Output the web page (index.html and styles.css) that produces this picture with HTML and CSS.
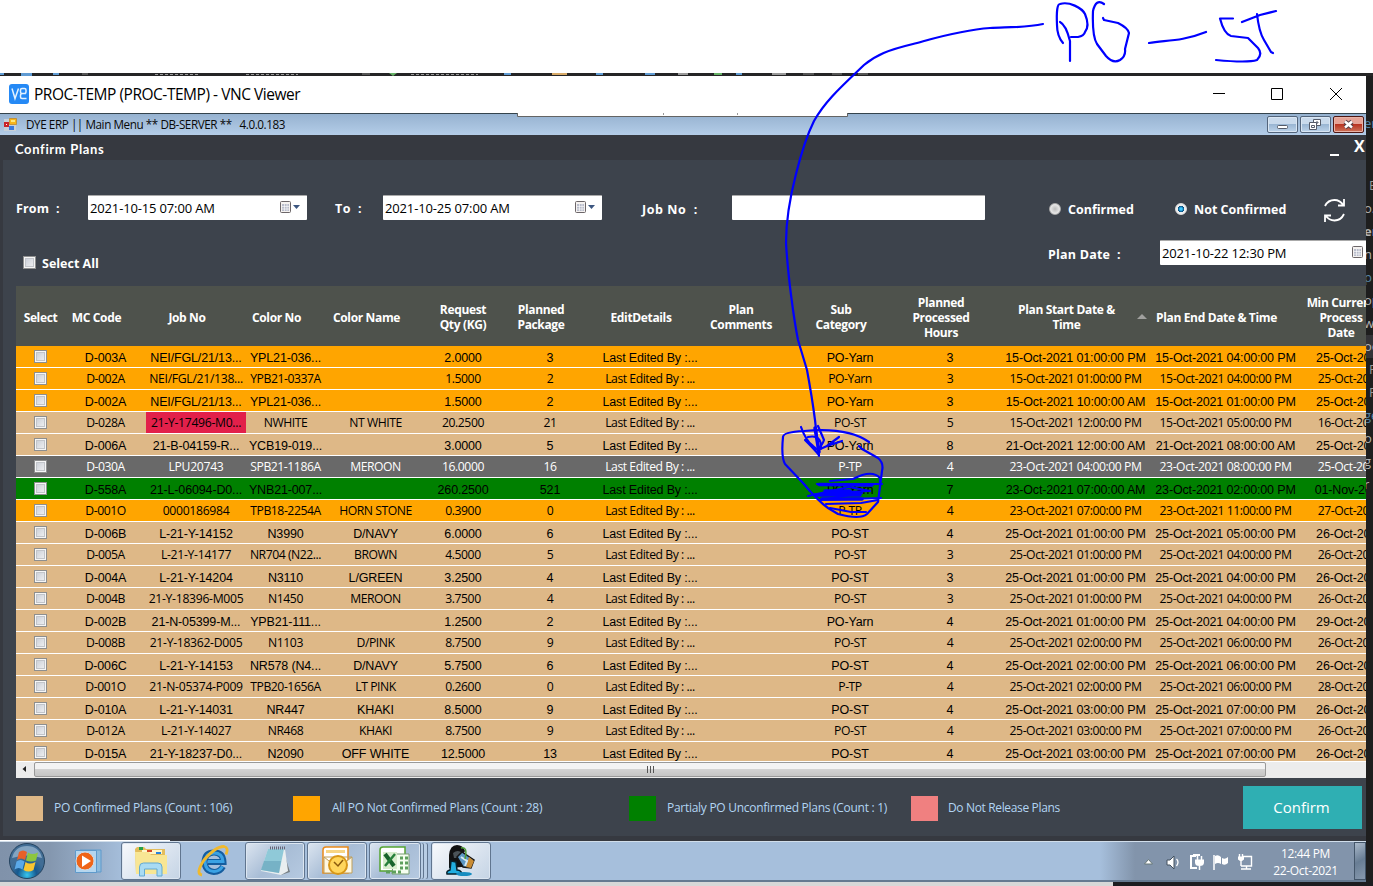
FILE: index.html
```html
<!DOCTYPE html>
<html lang="en">
<head>
<meta charset="utf-8">
<title>PROC-TEMP (PROC-TEMP) - VNC Viewer</title>
<link rel="stylesheet" href="styles.css">
</head>
<body>
<div class="blank"></div>
<div class="strip">
  <svg width="1373" height="3"><g fill="#5f9bd3"><path d="M0 0h4v2H0zM21 0h11v3H21zM53 0h6v2h-6zM504 0h7v2h-7zM596 0h7v2h-7zM645 0h10v2h-10zM736 0h6v2h-6z"/></g><g fill="none" stroke="#999"><path stroke-dasharray="3 2" d="M155 1.500h44M246 1.500h52M411 1.500h67"/></g><g fill="#999"><path d="M678 0h10v2h-10zM772 0h14v2h-14z"/></g><path fill="#d8aa68" d="M552 0h15v2h-15z"/><path fill="#66b266" d="M389 0h8l-4 3zM714 0h8v2h-8z"/><path fill="#555" d="M82 0h6v2h-6zM362 0h8v2h-8zM803 0h11v2h-11zM832 0h10v2h-10zM858 0h10v2h-10z"/></svg>
</div>
<div class="desk">
  <main class="vnc">
    <header class="vnc-title">
      <svg width="20" height="20" viewBox="0 0 20 20"><rect width="20" height="20" rx="3" fill="#2589f5"/><path d="M3 4.500l3 10 3.500-10M17 9.500h-4q-1.500 0-1.500-1.500V6q0-1.500 1.500-1.500h2.500q1.500 0 1.500 1.500v2q0 1.500-1.500 1.500h-2q-2 0-2 2V13q0 1.500 1.500 1.500H17.500" fill="none" stroke="#e4f2ff" stroke-width="1.500"/></svg>
      <span class="vnc-name">PROC-TEMP (PROC-TEMP) - VNC Viewer</span>
      <svg class="vnc-ctl" width="130" height="14" fill="none" stroke="#000"><path d="M0 6.500h12M58.500 1.500h11v11h-11zM117 1l12 12M129 1l-12 12"/></svg>
    </header>
    <div class="app-title">
      <svg width="13" height="13" viewBox="0 0 13 13"><path fill="#c8d0d8" d="M0 1h12v12H0z"/><path fill="#c9252b" d="M0 4h5v5H0z"/><path fill="#fff" d="M2 6h1v1H2z"/><path fill="#f7b51b" stroke="#b87811" stroke-width=".6" d="M5.500.5h7v6h-7z"/><path fill="#ffe77a" d="M7 2h4v2H7z"/><path fill="#3979dd" d="M5 8h5v4H5z"/></svg>
      <span class="app-name">DYE ERP || Main Menu ** DB-SERVER **&nbsp;&nbsp; 4.0.0.183</span>
      <span class="win-btn"><svg width="29" height="15"><rect x="9.500" y="8.500" width="10" height="3" rx="1" fill="#fff" stroke="#555b68"/></svg></span>
      <span class="win-btn"><svg width="29" height="15" fill="#fff" stroke="#555b68"><path d="M12.500 2.500h7v6h-7zM15 5h2v1h-2z"/><path d="M8.500 5.500h7v7h-7zM10.500 8.500h3v2h-3z"/></svg></span>
      <span class="win-btn win-close"><svg width="29" height="15"><path d="M11 4.500l7 6M18 4.500l-7 6" stroke="#554047" stroke-width="4.500"/><path d="M11 4.500l7 6M18 4.500l-7 6" stroke="#fff" stroke-width="2.500"/></svg></span>
      <svg class="notch" width="331" height="5"><path d="M.5-1v4.500h330V-1" fill="#fff" stroke="#646464"/><path d="M146.500 0v2M220.500 0v2" stroke="#999"/></svg>
    </div>
    <div class="form-title"><span class="form-name">Confirm Plans</span><span class="form-min"></span><span class="form-x">X</span></div>
    <section class="panel">
      <div class="filters">
        <label class="lbl l-from">From&nbsp; :</label>
        <div class="date"><span>2021-10-15 07:00 AM</span><svg width="21" height="14"><use href="#cal"/><path d="M13 4h7l-3.500 4z" fill="#3c5680"/></svg></div>
        <label class="lbl l-to">To&nbsp; :</label>
        <div class="date"><span>2021-10-25 07:00 AM</span><svg width="21" height="14"><use href="#cal"/><path d="M13 4h7l-3.500 4z" fill="#3c5680"/></svg></div>
        <label class="lbl l-job">Job No&nbsp; :</label>
        <div class="job-input"></div>
        <span class="radio r-a"></span><span class="lbl l-conf">Confirmed</span>
        <span class="radio on"></span><span class="lbl l-not">Not Confirmed</span>
        <svg class="refresh" width="24" height="26" fill="none" stroke="#fff" stroke-width="1.800"><path d="M2 9Q5 3 11.500 3q5.500 0 9 5.500M21 2v6.500h-6M21 17Q18 23.500 11.500 23.500q-5.500 0-9-5M2 25v-6.500h6"/></svg>
      </div>
      <div class="second">
        <span class="check"></span><span class="lbl l-all">Select All</span>
        <span class="lbl l-plan">Plan Date&nbsp; :</span>
        <div class="date plan"><span>2021-10-22 12:30 PM</span><svg width="13" height="14"><g id="cal"><rect x=".5" y=".5" width="10" height="11" rx="1" fill="#f5f2f0" stroke="#6c6669"/><path d="M2 3h7v7H2z" fill="#b9bdcb"/><path d="M4.500 3v7M7 3v7M2 5.500h7M2 8h7" stroke="#fff" stroke-width=".6"/></g></svg></div>
      </div>
      <div class="table">
        <div class="thead grid"><div class="flush">Select</div><div>MC Code</div><div>Job No</div><div>Color No</div><div>Color Name</div><div class="flush">Request<br>Qty (KG)</div><div>Planned<br>Package</div><div>EditDetails</div><div>Plan<br>Comments</div><div>Sub<br>Category</div><div>Planned<br>Processed<br>Hours</div><div class="sorted">Plan Start Date &amp;<br>Time<i></i></div><div>Plan End Date &amp; Time</div><div>Min Current<br>Process<br>Date</div></div>
        <div class="tbody" id="rows"></div>
        <div class="hscroll"><svg width="18" height="15"><path d="M10 4v6L6.500 7z" fill="#222"/></svg><div class="thumb"><i></i><i></i><i></i></div></div>
      </div>
      <div class="legend">
        <i class="sw tan"></i><span class="lg g1">PO Confirmed Plans (Count : 106)</span>
        <i class="sw orange"></i><span class="lg g2">All PO Not Confirmed Plans (Count : 28)</span>
        <i class="sw green"></i><span class="lg g3">Partialy PO Unconfirmed Plans (Count : 1)</span>
        <i class="sw coral"></i><span class="lg g4">Do Not Release Plans</span>
        <button class="confirm">Confirm</button>
      </div>
    </section>
    <div class="form-foot"></div>
    <footer class="taskbar">
      <div class="tk start"><svg width="38" height="38" viewBox="0 0 38 38"><defs><radialGradient id="orb" cy=".9"><stop offset="0" stop-color="#38c6ee"/><stop offset=".55" stop-color="#17598f"/><stop offset="1" stop-color="#416d95"/></radialGradient></defs><circle cx="19" cy="19" r="17.500" fill="url(#orb)" stroke="#24435f"/><path d="M4 16Q7 4 19 4t15 12q-15-5-30 0" fill="#c5dced" opacity=".5"/><path fill="#e86128" d="M11 10q4-3 8 0l-2 8q-4-3-8 0z"/><path fill="#8dc63f" d="M20 10.500q4 3 10 0l-2 8q-5 2-10 0z"/><path fill="#5ba9e8" d="M8.500 19.500q4-3 8 0l-2 8q-4-3-8 0z"/><path fill="#fbc630" d="M17.500 20q4 3 10 0l-2 8q-5 3-10 0z"/></svg></div>
      <div class="tk wmp"><svg width="30" height="28"><path fill="#8dbbdd" stroke="#5f9acb" d="M6 3h21v22H6z"/><path fill="#b4d6ef" stroke="#5f9acb" d="M1.500 3.500h21v22h-21zM22.500 3.500v22"/><circle cx="11" cy="14" r="9" fill="#ef6417" stroke="#d5d9df"/><path d="M8 8.500l9 5.500-9 6z" fill="#fff"/></svg></div>
      <div class="tk box explorer"><svg width="34" height="32"><path fill="#e3bd5c" d="M1 4l2-2h7l2 2h19v24H2z"/><path fill="#fff6c8" d="M8 5h20v4H8z"/><path fill="#f8e694" d="M1 7h14l2 3h16v19H2z"/><path d="M5 3.500h4" stroke="#24a148" stroke-width="3"/><path d="M13 6h5" stroke="#d64826" stroke-width="2"/><path d="M22 8h5" stroke="#2683dd" stroke-width="2"/><path d="M5.500 31V22q0-4 4-4h14.500q4 0 4 4v9h-5v-7H10.500v7z" fill="#a9dbf3" stroke="#63a9d2"/></svg></div>
      <div class="tk ie"><svg width="34" height="32"><path d="M27 21.500q-3 5.500-9 5.500-9-1-9.500-10 .5-9.500 9.500-9.500 9 0 9.500 9.500H12" fill="none" stroke="#155d9e" stroke-width="6"/><path d="M26.500 21.500q-3 5-8.500 5-8.500-.5-9-9.500.5-9 9-9 8.500 0 9 8.500H12" fill="none" stroke="#3aa2e4" stroke-width="3"/><path d="M6 30Q-1 29 8 15 20 1 28 1.500q5 1 2 8" fill="none" stroke="#f0b92d" stroke-width="2.800"/></svg></div>
      <div class="tk box notepad"><svg width="32" height="30"><path fill="#777f84" d="M24 4l7 22-9 3z"/><path fill="#e9eef0" d="M9 3h17l3 22-7 4L2 25z"/><path fill="#8fc9d8" d="M9 3h16l-5 24-18-3z"/><path fill="#5d9cb3" d="M5 15h17l-2 12-18-3z" opacity=".5"/><path d="M11 2h15" stroke="#667" stroke-width="3" stroke-dasharray="1 1"/></svg></div>
      <div class="tk box outlook"><svg width="34" height="32"><path fill="#fff" stroke="#e98a1b" stroke-width="1.500" d="M3 5q0-3 3-3h22v26H3z"/><path fill="#f7d584" d="M6 5h19v3H6z"/><path fill="#fff7e0" stroke="#bfa05c" d="M4 12h28v16H4zM4 12l14 11 14-11"/><circle cx="18" cy="20" r="9" fill="#ffd65c" stroke="#d79718" stroke-width="2"/><path d="M14 17l4 4 5-6" fill="none" stroke="#8a5a0c" stroke-width="1.500"/></svg></div>
      <div class="tk box excel"><svg width="34" height="32"><path fill="#fff" stroke="#55a532" stroke-width="1.500" d="M2 5q0-3 3-3h22v24H2z"/><path fill="#f5fff0" stroke="#779b72" d="M16 9h15v20H14z"/><path d="M22 13h3M27 13h3M22 18h3M27 18h3M22 23h3M27 23h3M8 27h4M14 27h4M20 27h3" stroke="#5da05c" stroke-width="3"/><path fill="#d8edcd" d="M5 7h14v17H5z"/><path d="M7 9l9 12" stroke="#17642b" stroke-width="4"/><path d="M17 9L7 21" stroke="#27803b" stroke-width="2.500"/></svg></div>
      <div class="tk box app"><svg width="36" height="34"><path d="M6 24V11q1-10 8-10 6 0 8 6l-3 5v11z" fill="#111"/><path d="M10 9q5-4 9 0l-1 5h-7z" fill="#4b5357"/><path d="M8 17l5 1 1 8q4 0 5 4H4q-1-3 3-4z" fill="#21aee0" stroke="#06222e" stroke-width="1.500"/><path d="M14 13l5-5 12 8-3 8-8-1z" fill="#5d98c4" stroke="#151515" stroke-width="1.500"/><path d="M26 13l5 4-3 7-5-1z" fill="#c98c34"/><path d="M18 13l6 4-2 5" fill="none" stroke="#d7e9f2" stroke-width="2"/><path d="M18 4q7-2 4 11" fill="none" stroke="#4e9c37" stroke-width="1.500"/><ellipse cx="21" cy="30" rx="8" ry="2" fill="#168cc0"/></svg></div>
      <div class="tray"><svg width="112" height="20" fill="none"><path d="M.5 12l4-4.500 4 4.500z" fill="#fff" stroke="#677"/><path d="M23 8h3l4-4v13l-4-4h-3z" fill="#fff" stroke="#43505f"/><path d="M32.500 7q3 3 0 7" stroke="#fff" stroke-width="1.300"/><path d="M52 4h-5v12h6" stroke="#fff" stroke-width="2"/><path d="M49 2h7v2h-7zM51 7.500h9v3q0 3.500-4.500 3.500T51 10.500z" fill="#fff"/><path d="M53.500 4v4M57.500 4v4M55.500 14v4" stroke="#fff" stroke-width="1.500"/><path d="M70 3v15" stroke="#fff" stroke-width="1.500"/><path d="M71 4q3-2 6 1v7q-3-2-6 0zM78 6q3 2 6-1v6q-3 3-6 1z" fill="#fff"/><path d="M99 4.500h8.500v9.500H97M97 17h10M102.500 14v3M95.500 2v3M98.500 2v3" stroke="#fff" stroke-width="1.400"/><path d="M94 4.500h6v3l-2 1.500h-2l-2-1.500z" fill="#fff"/><path d="M97 9v5" stroke="#fff" stroke-width="1.400"/></svg></div>
      <div class="clock"><span>12:44 PM</span><span>22-Oct-2021</span></div>
      <div class="peek"></div>
    </footer>
  </main>
  <aside class="editor"><span class="e1 blue">er</span><span class="e2">E</span><span>o.</span><span class="b">er</span><span>n</span><span class="blue">p</span><span>op</span><span>w</span><span class="hl">oc</span><span class="in">F</span><span class="in">F</span><span class="blue">ge</span><span>o</span><span>g</span><span>r</span></aside>
</div>
<div class="under"><div class="dark"></div></div>
<svg class="ink" width="1373" height="886" fill="none" stroke="#0000ff" stroke-width="2.200" stroke-linecap="round" stroke-linejoin="round">
  <path d="M1043 24C1025 28 1005 27 990 28C960 30 932 39 913 44C888 50 876 55 864 65C842 86 825 101 814 121C805 139 800 158 796 174C789 201 786 228 786 243C788 277 794 320 798 340L807 370Q812 397 815 420L819 456"/>
  <path d="M1063 43Q1057 36 1057 25Q1056 4 1060 4C1069 1 1082 8 1085 14Q1090 26 1085 32Q1084 36 1078 37H1071M1060 22Q1066 25 1070 41V61"/>
  <path d="M1104 4Q1096-2 1093 11Q1092 36 1097 44L1106 56Q1113 64 1120 60Q1126 56 1125 49L1129 33Q1128 28 1118 23L1104 20L1103 18M1149 43C1165 40 1181 42 1206 32"/>
  <path d="M1233 18.500H1220Q1224 34 1231 36L1248 38L1258 48Q1263 54 1257 60Q1248 63 1216 60M1242 22L1260 15L1276 11M1257 14Q1259 32 1264 40L1271 52L1273 53"/>
  <path d="M869 442C852 430 825 429 804 431Q783 432 783 437Q781 457 785 464L803 483Q818 501 828 508L838 514Q860 520 867 514L878 502L882 471Q884 463 878 458L862 449L859 446"/>
  <path d="M801 427Q806 441 813 446L819 451M818 426L824 440Q822 446 818 448M808 437Q822 434 821 449M805 440Q814 449 819 455M839 437L827 446M842 441L827 446L818 450"/>
  <path d="M815 428L819 452" stroke-width="3.500"/>
  <path d="M817 484H882M830 481L853 479Q872 469 880 478L880 487M808 496L849 487L870 491L822 493H862L820 500L881 498M826 504L861 503L878 500M830 508L851 512L866 512"/>
  <path d="M819 484.500L872 485M825 491H850M815 495H860M822 499H862" stroke-width="3.500"/>
</svg>
<script src="app.js"></script>
</body>
</html>
```
FILE: styles.css
```css
* { box-sizing: border-box; }
body { margin: 0; width: 1373px; height: 886px; overflow: hidden; background: #fff; font-family: "Open Sans", "Noto Sans", sans-serif; font-size: 12px; position: relative; }
svg { display: block; flex: none; }
.blank { height: 73px; }
.strip { height: 3px; background: #252526; }
.desk { display: flex; height: 806px; }
.vnc { width: 1366px; flex: none; display: flex; flex-direction: column; overflow: hidden; }
.vnc-title { height: 37px; flex: none; background: #fff; display: flex; align-items: center; padding: 0 23px 1px 9px; }
.vnc-name { margin-left: 5px; font-size: 15.5px; letter-spacing: -.47px; white-space: nowrap; }
.vnc-ctl { margin-left: auto; }
.app-title { position: relative; height: 22px; flex: none; border-top: 1px solid #34434c; background: linear-gradient(#96b2d0, #b4cde8); display: flex; align-items: center; padding: 0 2px 1px 4px; color: #080808; }
.app-name { margin-left: 9px; margin-right: auto; font-size: 11.7px; letter-spacing: -.43px; white-space: nowrap; }
.win-btn { width: 31px; height: 17px; margin-left: 2px; border: 1px solid #53657c; border-radius: 2px; background: linear-gradient(#c9daec 0 45%, #9ab6d3 50%, #bcd3ea); box-shadow: inset 0 0 0 1px #d9e6f3; overflow: hidden; }
.win-close { border-color: #4f1713; background: linear-gradient(#e5a295 0 45%, #b93421 50%, #cc745b); box-shadow: inset 0 0 0 1px #e8b3a7; }
.notch { position: absolute; left: 517px; top: -1px; }
.form-title { height: 25px; flex: none; background: #363940; color: #fff; display: flex; padding-left: 15px; }
.form-name { font: bold 13px/28px Lato, sans-serif; letter-spacing: .65px; }
.form-min { width: 9px; height: 2px; margin: 19px 15px 0 auto; background: #fff; }
.form-x { width: 12px; font: bold 16px/22px "Open Sans", sans-serif; }
.panel { flex: none; height: 676px; border-left: 3px solid #363940; background: #3d434c; padding-left: 13px; overflow: hidden; }
.lbl { color: #fff; font-weight: bold; font-size: 12.5px; white-space: nowrap; flex: none; }
.filters { height: 75px; padding-top: 35px; display: flex; align-items: flex-start; }
.filters .lbl { line-height: 27px; }
.filters .l-conf, .filters .l-not { line-height: 29px; }
.l-from { width: 72px; letter-spacing: .15px; }
.l-to { width: 48px; margin-left: 28px; letter-spacing: .4px; }
.filters .l-job { width: 90px; margin-left: 40px; letter-spacing: .55px; line-height: 29px; }
.date { width: 219px; height: 25px; flex: none; background: #fff; border-top: 1px solid #aaa; border-radius: 1px; display: flex; justify-content: space-between; color: #000; padding: 4px 6px 0 2px; line-height: 17px; font-size: 13px; letter-spacing: -.15px; white-space: nowrap; }
.date svg { margin-top: 1px; }
.job-input { width: 253px; flex: none; height: 25px; background: #fff; border-top: 1px solid #aaa; border-radius: 1px; }
.radio { width: 12px; height: 12px; border-radius: 50%; margin: 8px 7px 0 0; border: 1px solid #aaa; background: radial-gradient(#bbb, #eee 75%); flex: none; }
.r-a { margin-left: 64px; }
.on { border: 1px solid #ddd; background: radial-gradient(circle, #3bc8ff 0 15%, #064a7c 42%, #eee 50%); margin-right: 7px; }
.l-conf { width: 107px; }
.l-not { width: 130px; }
.refresh { margin: 2px 0 0 -1px; }
.second { height: 51px; padding-top: 5px; display: flex; align-items: flex-start; }
.check { width: 13px; height: 13px; flex: none; border: 1px solid #8e8f8f; background: linear-gradient(135deg, #c5cad4, #f5f5f5); box-shadow: inset 0 0 0 1px #f6f6f6, inset 0 0 0 2px #c2c5ca; }
.second .check { margin: 16px 6px 0 7px; }
.l-all { width: 1006px; line-height: 47px; }
.l-plan { width: 112px; line-height: 29px; letter-spacing: .2px; }
.second .plan { padding-right: 14px; }
.table { width: 1350px; height: 492px; overflow: hidden; background: #fff; }
.grid { display: grid; width: 1384px; grid-template-columns: 49px 81px 100px 79px 101px 74px 100px 100px 100px 100px 100px 151px 149px 100px; }
.thead { height: 60px; background: #4e524c; color: #fff; font-weight: bold; font-size: 12px; line-height: 15px; letter-spacing: -.35px; text-align: center; white-space: nowrap; }
.thead > div { display: flex; flex-direction: column; justify-content: center; align-items: center; padding: 2px 18px 0 0; }
.thead > .flush { padding-right: 0; }
.sorted { position: relative; }
.sorted i { position: absolute; right: 4px; top: 28px; border: 5px solid transparent; border-top: 0; border-bottom-color: #a0a09e; }
.tbody { height: 415px; overflow: hidden; }
.row { height: 22px; border-bottom: 1px solid #fff; background: #deb887; text-align: center; color: #000; white-space: nowrap; grid-template-rows: 21px; }
.row > div { min-width: 0; }
.row:nth-child(odd) { font: 12.5px/24px "Liberation Sans", sans-serif; letter-spacing: -.15px; }
.row:nth-child(even) { font-size: 12.2px; line-height: 21px; letter-spacing: -.45px; }
.row:nth-child(even) > div:nth-child(3) { letter-spacing: -.3px; }
.row .check { display: block; margin: 4px auto 0; }
.row.orange { background: #ffa500; }
.row.gray { background: #696969; color: #fff; }
.row.green { background: #008000; }
.hot { background: #e2204a; }
.hscroll { height: 17px; background: #ececec; border-top: 1px solid #fff; display: flex; }
.thumb { width: 1232px; height: 15px; border: 1px solid #999; border-radius: 2px; background: linear-gradient(#f3f3f3 0 45%, #d2d2d2 50%, #c5c5c5); display: flex; gap: 2px; justify-content: center; padding-top: 3px; }
.thumb i { width: 1px; height: 7px; background: #555; }
.legend { display: flex; padding-top: 8px; }
.sw { width: 27px; height: 25px; margin: 10px 11px 0 0; flex: none; }
.tan { background: #deb887; } .orange { background: #ffa500; } .green { background: #008000; } .coral { background: #f08080; }
.lg { color: #b2d5f3; line-height: 44px; font-size: 12px; letter-spacing: -.24px; white-space: nowrap; flex: none; }
.g1 { width: 239px; } .g2 { width: 298px; padding-left: 1px; } .g3 { width: 244px; letter-spacing: -.28px; } .g4 { width: 294px; letter-spacing: -.35px; text-indent: -1px; }
.confirm { width: 119px; height: 43px; border: 0; padding: 0 2px 1px 0; background: #2fafb3; color: #fff; font: 15px "Open Sans", sans-serif; }
.form-foot { height: 5px; flex: none; background: linear-gradient(90deg, #fff 170px, #363940 170px) 0 100% / 100% 1px no-repeat #363940; }
.taskbar { height: 41px; flex: none; display: flex; border-top: 1px solid #d1deeb; border-bottom: 2px solid #657990; background: linear-gradient(90deg, #8092aa 0, #8497af 50px, #a6bfdc 125px, #a6bfdc 1100px, #8294ab 1135px); }
.tk { display: flex; flex: none; align-items: center; justify-content: center; }
.box { border: 1px solid #60758f; border-radius: 3px; background: linear-gradient(135deg, #dce5f0, #a8bdd6 50%, #b6cae1); box-shadow: inset 0 0 0 1px #dce6f1; }
.start { width: 54px; } .wmp { width: 67px; padding-left: 3px; } .explorer { width: 60px; background: linear-gradient(135deg, #f7f9fc, #c5d4e5); } .ie { width: 64px; }
.notepad { width: 60px; margin-right: 2px; } .outlook { width: 60px; margin-right: 2px; }
.excel { width: 52px; margin-right: 10px; box-shadow: inset 0 0 0 1px #dce6f1, 3px 0 0 -1px #b8cde4, 4px 0 0 -1px #60758f, 7px 0 0 -1px #b8cde4, 8px 0 0 -1px #60758f; }
.app { width: 60px; background: linear-gradient(135deg, #f7f9fc, #c5d4e5); }
.tray { margin: 10px 0 0 653px; width: 112px; flex: none; }
.clock { width: 98px; flex: none; display: flex; flex-direction: column; align-items: center; padding: 3px 0 0 1px; color: #fff; font-size: 12px; line-height: 17px; letter-spacing: -.35px; }
.peek { margin-left: auto; width: 13px; border: 1px solid #44566a; background: linear-gradient(150deg, #aab9ca, #687d94 50%, #8799ae); }
.editor { width: 7px; background: #1e1e1e; color: #b4b4b4; font: 13px/23px "Open Sans", sans-serif; overflow: hidden; display: flex; flex-direction: column; }
.editor span { height: 23px; flex: none; white-space: nowrap; text-indent: -2px; }
.editor .e1 { margin-top: 36px; margin-bottom: 39px; }
.editor .e2, .editor .in { text-indent: 3px; color: #999; }
.editor .blue { color: #5687aa; } .editor .b { font-weight: bold; } .editor .hl { background: #333337; }
.under { height: 4px; background: #d7d7d7; display: flex; justify-content: flex-end; }
.dark { width: 260px; background: #1d1d20; }
.ink { position: absolute; left: 0; top: 0; pointer-events: none; }
```
FILE: app.js
```js
// class | MC code | job | colour no | colour name | qty | package | category | hours | start | end | min process date
const plans = `
orange|D-003A|NEI/FGL/21/13...|YPL21-036...||2.0000|3|PO-Yarn|3|15-Oct-2021 01:00:00 PM|15-Oct-2021 04:00:00 PM|25-Oct-2021
orange|D-002A|NEI/FGL/21/138...|YPB21-0337A||1.5000|2|PO-Yarn|3|15-Oct-2021 01:00:00 PM|15-Oct-2021 04:00:00 PM|25-Oct-2021
orange|D-002A|NEI/FGL/21/13...|YPL21-036...||1.5000|2|PO-Yarn|3|15-Oct-2021 10:00:00 AM|15-Oct-2021 01:00:00 PM|25-Oct-2021
late|D-028A|21-Y-17496-M0...|NWHITE|NT WHITE|20.2500|21|PO-ST|5|15-Oct-2021 12:00:00 PM|15-Oct-2021 05:00:00 PM|16-Oct-2021
|D-006A|21-B-04159-R...|YCB19-019...||3.0000|5|PO-Yarn|8|21-Oct-2021 12:00:00 AM|21-Oct-2021 08:00:00 AM|25-Oct-2021
gray|D-030A|LPU20743|SPB21-1186A|MEROON|16.0000|16|P-TP|4|23-Oct-2021 04:00:00 PM|23-Oct-2021 08:00:00 PM|25-Oct-2021
green|D-558A|21-L-06094-D0...|YNB21-007...||260.2500|521|PO-Yarn|7|23-Oct-2021 07:00:00 AM|23-Oct-2021 02:00:00 PM|01-Nov-2021
orange|D-001O|0000186984|TPB18-2254A|HORN STONE|0.3900|0|P-TP|4|23-Oct-2021 07:00:00 PM|23-Oct-2021 11:00:00 PM|27-Oct-2021
|D-006B|L-21-Y-14152|N3990|D/NAVY|6.0000|6|PO-ST|4|25-Oct-2021 01:00:00 PM|25-Oct-2021 05:00:00 PM|26-Oct-2021
|D-005A|L-21-Y-14177|NR704 (N22...|BROWN|4.5000|5|PO-ST|3|25-Oct-2021 01:00:00 PM|25-Oct-2021 04:00:00 PM|26-Oct-2021
|D-004A|L-21-Y-14204|N3110|L/GREEN|3.2500|4|PO-ST|3|25-Oct-2021 01:00:00 PM|25-Oct-2021 04:00:00 PM|26-Oct-2021
|D-004B|21-Y-18396-M005|N1450|MEROON|3.7500|4|PO-ST|3|25-Oct-2021 01:00:00 PM|25-Oct-2021 04:00:00 PM|26-Oct-2021
|D-002B|21-N-05399-M...|YPB21-111...||1.2500|2|PO-Yarn|4|25-Oct-2021 01:00:00 PM|25-Oct-2021 04:00:00 PM|29-Oct-2021
|D-008B|21-Y-18362-D005|N1103|D/PINK|8.7500|9|PO-ST|4|25-Oct-2021 02:00:00 PM|25-Oct-2021 06:00:00 PM|26-Oct-2021
|D-006C|L-21-Y-14153|NR578 (N4...|D/NAVY|5.7500|6|PO-ST|4|25-Oct-2021 02:00:00 PM|25-Oct-2021 06:00:00 PM|26-Oct-2021
|D-001O|21-N-05374-P009|TPB20-1656A|LT PINK|0.2600|0|P-TP|4|25-Oct-2021 02:00:00 PM|25-Oct-2021 06:00:00 PM|28-Oct-2021
|D-010A|L-21-Y-14031|NR447|KHAKI|8.5000|9|PO-ST|4|25-Oct-2021 03:00:00 PM|25-Oct-2021 07:00:00 PM|26-Oct-2021
|D-012A|L-21-Y-14027|NR468|KHAKI|8.7500|9|PO-ST|4|25-Oct-2021 03:00:00 PM|25-Oct-2021 07:00:00 PM|26-Oct-2021
|D-015A|21-Y-18237-D0...|N2090|OFF WHITE|12.5000|13|PO-ST|4|25-Oct-2021 03:00:00 PM|25-Oct-2021 07:00:00 PM|26-Oct-2021`;

document.getElementById('rows').innerHTML = plans.trim().split('\n').map((line, i) => {
  const [kind, mc, job, no, name, qty, pack, cat, hrs, start, end, min] = line.split('|');
  const edited = i % 2 ? 'Last Edited By : ...' : 'Last Edited By :...';
  const cells = [mc, job, no, name, qty, pack, edited, '', cat, hrs, start, end, min];
  return `<div class="row grid ${kind}"><div><span class="check"></span></div>` +
    cells.map((c, n) => `<div${kind === 'late' && n === 1 ? ' class="hot"' : ''}>${c}</div>`).join('') + '</div>';
}).join('');
```
